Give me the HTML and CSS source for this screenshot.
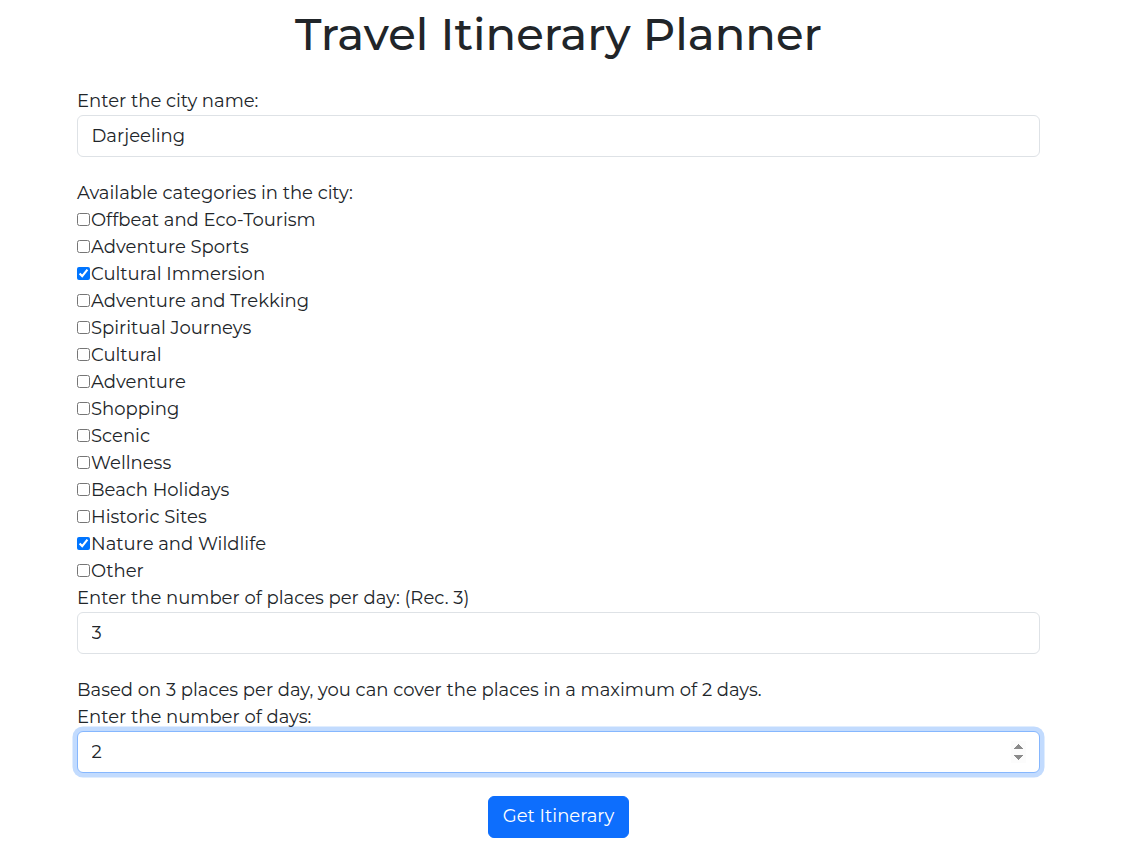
FILE: index.html
```html
<!DOCTYPE html>
<html lang="en">
<head>
<meta charset="utf-8">
<title>Travel Itinerary Planner</title>
<link rel="stylesheet" href="styles.css">
</head>
<body>
<main class="page">
  <h1 class="title">Travel Itinerary Planner</h1>
  <form class="planner">
    <label class="field-label" for="city">Enter the city name:</label>
    <input class="form-control" id="city" type="text" value="Darjeeling">

    <div class="field-label">Available categories in the city:</div>
    <div class="categories">
      <div class="check"><input type="checkbox" id="c1"><label for="c1">Offbeat and Eco-Tourism</label></div>
      <div class="check"><input type="checkbox" id="c2"><label for="c2">Adventure Sports</label></div>
      <div class="check"><input type="checkbox" id="c3" checked><label for="c3">Cultural Immersion</label></div>
      <div class="check"><input type="checkbox" id="c4"><label for="c4">Adventure and Trekking</label></div>
      <div class="check"><input type="checkbox" id="c5"><label for="c5">Spiritual Journeys</label></div>
      <div class="check"><input type="checkbox" id="c6"><label for="c6">Cultural</label></div>
      <div class="check"><input type="checkbox" id="c7"><label for="c7">Adventure</label></div>
      <div class="check"><input type="checkbox" id="c8"><label for="c8">Shopping</label></div>
      <div class="check"><input type="checkbox" id="c9"><label for="c9">Scenic</label></div>
      <div class="check"><input type="checkbox" id="c10"><label for="c10">Wellness</label></div>
      <div class="check"><input type="checkbox" id="c11"><label for="c11">Beach Holidays</label></div>
      <div class="check"><input type="checkbox" id="c12"><label for="c12">Historic Sites</label></div>
      <div class="check"><input type="checkbox" id="c13" checked><label for="c13">Nature and Wildlife</label></div>
      <div class="check"><input type="checkbox" id="c14"><label for="c14">Other</label></div>
    </div>

    <label class="field-label" for="places">Enter the number of places per day: (Rec. 3)</label>
    <input class="form-control" id="places" type="number" value="3">

    <p class="note">Based on 3 places per day, you can cover the places in a maximum of 2 days.</p>
    <label class="field-label" for="days">Enter the number of days:</label>
    <input class="form-control is-focused" id="days" type="number" value="2">

    <div class="actions">
      <button class="btn-primary" type="button">Get Itinerary</button>
    </div>
  </form>
</main>
</body>
</html>
```
FILE: styles.css
```css
* { box-sizing: border-box; }

html, body {
  margin: 0;
  padding: 0;
  background: #fff;
}

body {
  font-family: "Montserrat", "Inter", "Open Sans", sans-serif;
  font-size: 18px;
  line-height: 27px;
  color: #212529;
}

.page {
  width: 963px;
  margin-left: 77px;
  padding-top: 7px;
}

.title {
  margin: 0 0 26.5px;
  font-size: 45px;
  font-weight: 500;
  line-height: 54px;
  text-align: center;
  color: #212529;
}

.planner {
  display: flex;
  flex-direction: column;
}

.field-label {
  display: block;
}

.note {
  margin: 0;
}

.form-control {
  display: block;
  width: 100%;
  height: 42.5px;
  margin: 0 0 22.5px;
  padding: 6.75px 13.5px;
  font-family: inherit;
  font-size: 18px;
  line-height: 27px;
  color: #212529;
  background: #fff;
  border: 1px solid #dee2e6;
  border-radius: 6px;
  outline: none;
}

.form-control.is-focused {
  border-color: #86b7fe;
  box-shadow: 0 0 0 4.5px rgba(13, 110, 253, 0.25);
}

.form-control.is-focused::-webkit-inner-spin-button {
  opacity: 1;
}

.categories {
  display: flex;
  flex-direction: column;
}

.check {
  display: flex;
  align-items: center;
  height: 27px;
}

.check input {
  width: 13px;
  height: 13px;
  margin: 0 1px 0 0;
  position: relative;
  top: -1px;
}

.actions {
  display: flex;
  justify-content: center;
}

.btn-primary {
  padding: 6.75px 13.5px;
  font-family: inherit;
  font-size: 18px;
  line-height: 27px;
  color: #fff;
  background: #0d6efd;
  border: 1px solid #0d6efd;
  border-radius: 6px;
  cursor: pointer;
}
```
